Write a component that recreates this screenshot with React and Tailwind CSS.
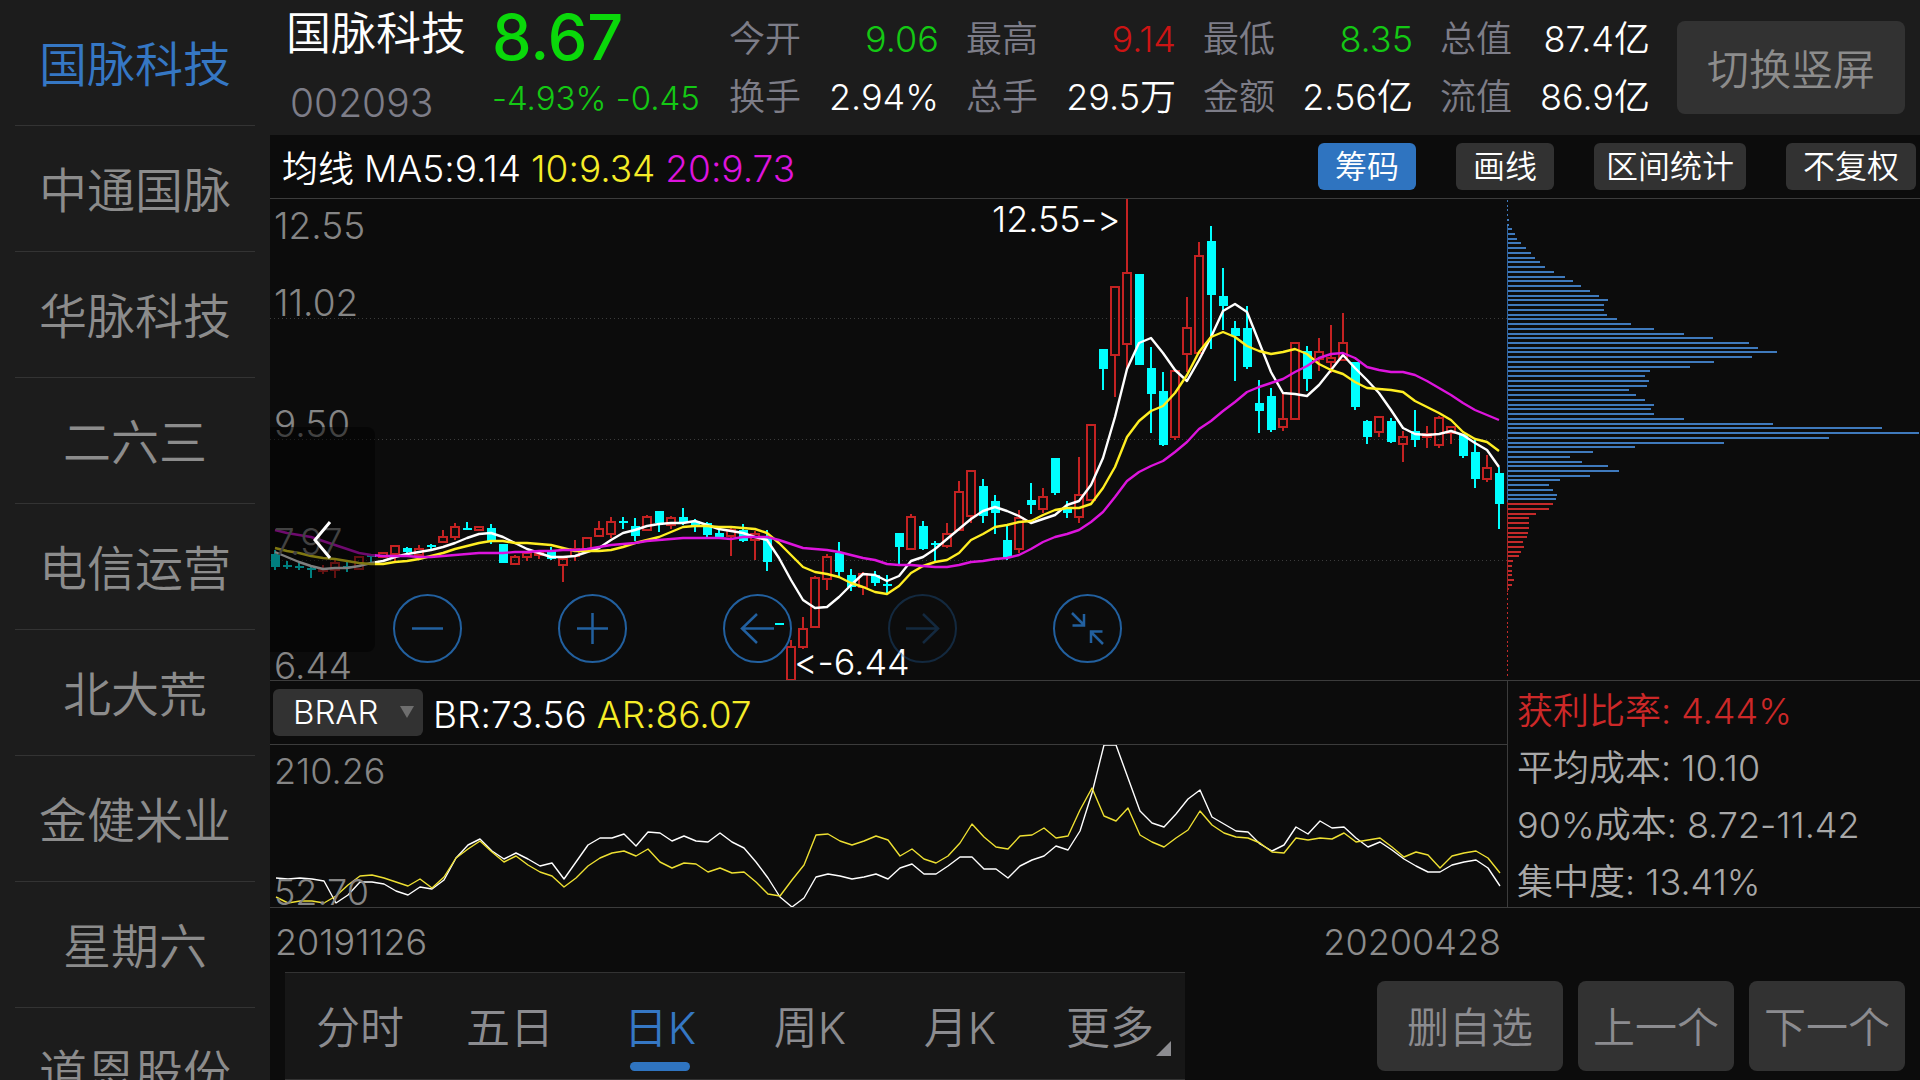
import React, { useState } from 'react';

const stocks = ['国脉科技', '中通国脉', '华脉科技', '二六三', '电信运营', '北大荒', '金健米业', '星期六', '道恩股份'];

const quotes = [
  { label: '今开', value: '9.06', color: 'text-[#14c814]' },
  { label: '最高', value: '9.14', color: 'text-[#cd1414]' },
  { label: '最低', value: '8.35', color: 'text-[#14c814]' },
  { label: '总值', value: '87.4亿', color: 'text-white' },
  { label: '换手', value: '2.94%', color: 'text-white' },
  { label: '总手', value: '29.5万', color: 'text-white' },
  { label: '金额', value: '2.56亿', color: 'text-white' },
  { label: '流值', value: '86.9亿', color: 'text-white' },
];

const periods = ['分时', '五日', '日K', '周K', '月K', '更多'];

// [up, high, body top, body bottom, low]
const candles = [
  [0, 550, 554, 567, 570], [0, 561, 565, 567, 569], [0, 562, 566, 568, 570], [0, 566, 568, 570, 578],
  [1, 565, 569, 571, 574], [1, 560, 563, 570, 578], [0, 562, 566, 568, 572], [1, 556, 557, 569, 570],
  [0, 554, 555, 557, 563], [1, 552, 553, 557, 558], [1, 546, 546, 554, 561], [0, 547, 548, 552, 554],
  [1, 545, 549, 555, 558], [0, 544, 545, 547, 549], [1, 530, 537, 542, 542], [1, 523, 527, 537, 540],
  [0, 522, 528, 530, 530], [1, 526, 527, 530, 531], [0, 524, 528, 541, 544], [0, 544, 544, 563, 563],
  [1, 555, 557, 564, 565], [1, 552, 553, 557, 561], [1, 552, 553, 555, 559], [0, 547, 550, 559, 560],
  [1, 558, 559, 565, 582], [1, 540, 549, 556, 561], [1, 537, 538, 549, 550], [1, 521, 529, 536, 536],
  [1, 517, 522, 534, 538], [0, 517, 521, 523, 529], [0, 518, 526, 536, 541], [1, 515, 517, 530, 530],
  [0, 511, 511, 523, 532], [1, 516, 518, 525, 529], [0, 508, 517, 523, 525], [0, 519, 521, 525, 532],
  [0, 522, 523, 535, 537], [0, 527, 533, 537, 538], [1, 527, 530, 536, 556], [0, 524, 530, 541, 542],
  [1, 531, 534, 540, 560], [0, 530, 537, 562, 571], [0, 623, 623, 625, 625], [1, 640, 647, 680, 680],
  [1, 617, 629, 647, 649], [1, 576, 578, 627, 627], [1, 554, 557, 579, 590], [0, 542, 553, 572, 577],
  [0, 569, 575, 587, 591], [1, 572, 574, 587, 595], [0, 571, 575, 583, 586], [0, 575, 584, 586, 593],
  [0, 533, 533, 547, 565], [1, 514, 517, 549, 549], [0, 521, 526, 549, 550], [0, 541, 543, 545, 562],
  [1, 523, 534, 546, 548], [1, 481, 492, 530, 531], [1, 470, 471, 516, 523], [0, 479, 486, 516, 523],
  [0, 495, 501, 513, 534], [0, 526, 540, 558, 560], [1, 510, 518, 549, 553], [0, 483, 500, 505, 514],
  [1, 488, 497, 509, 513], [0, 458, 458, 493, 495], [0, 501, 508, 513, 518], [1, 457, 495, 517, 523],
  [1, 424, 425, 500, 501], [0, 349, 349, 369, 390], [1, 286, 287, 355, 397], [1, 198, 273, 344, 369],
  [0, 274, 274, 365, 365], [0, 347, 368, 394, 433], [0, 372, 391, 445, 446], [1, 370, 371, 437, 440],
  [1, 297, 328, 354, 372], [1, 242, 256, 353, 354], [0, 226, 241, 295, 349], [0, 268, 296, 306, 330],
  [0, 321, 328, 336, 381], [0, 306, 328, 367, 369], [0, 380, 403, 411, 433], [0, 388, 396, 430, 432],
  [1, 393, 419, 427, 431], [1, 342, 343, 419, 420], [0, 346, 351, 379, 391], [1, 338, 352, 359, 371],
  [1, 325, 358, 362, 373], [1, 313, 343, 360, 361], [0, 362, 362, 407, 410], [0, 420, 421, 437, 444],
  [1, 416, 417, 432, 437], [0, 418, 421, 442, 443], [1, 431, 437, 444, 462], [0, 410, 431, 440, 447],
  [1, 426, 434, 437, 448], [1, 416, 418, 445, 448], [1, 426, 427, 433, 444], [0, 434, 434, 456, 458],
  [0, 440, 452, 479, 488], [1, 455, 468, 479, 482], [0, 467, 473, 504, 529],
];

const ma5 = [
  552, 557, 562, 566, 569, 568, 568, 566, 563, 561, 557, 554, 552, 550, 547, 543, 538, 534, 533, 537,
  543, 549, 553, 557, 557, 556, 552, 548, 540, 533, 530, 526, 524, 523, 523, 521, 525, 529, 531, 533,
  537, 540, 558, 580, 600, 608, 607, 597, 585, 574, 575, 581, 576, 561, 557, 549, 539, 529, 519, 511,
  507, 511, 516, 523, 519, 515, 505, 501, 485, 458, 417, 369, 343, 338, 353, 370, 381, 360, 337, 311,
  304, 312, 342, 372, 393, 394, 396, 385, 370, 355, 368, 380, 393, 410, 428, 434, 435, 434, 431, 435,
  443, 450, 467,
];

const ma10 = [
  548, 551, 553, 556, 558, 559, 561, 563, 564, 564, 562, 561, 559, 556, 553, 549, 546, 543, 541, 541,
  543, 543, 544, 545, 548, 551, 551, 551, 550, 547, 543, 540, 537, 532, 527, 526, 526, 527, 527, 528,
  529, 533, 543, 555, 567, 572, 574, 577, 583, 587, 592, 594, 586, 573, 566, 562, 560, 553, 540, 534,
  527, 525, 522, 521, 515, 510, 508, 508, 504, 488, 467, 437, 421, 411, 406, 393, 375, 352, 337, 332,
  337, 346, 351, 354, 352, 349, 354, 364, 370, 374, 382, 388, 389, 390, 392, 401, 407, 413, 420, 432,
  439, 442, 451,
];

const ma20 = [
  530, 533, 535, 537, 541, 545, 549, 553, 555, 556, 556, 556, 557, 557, 556, 555, 554, 553, 553, 553,
  552, 552, 551, 551, 550, 550, 549, 547, 545, 544, 543, 541, 540, 539, 538, 538, 538, 538, 539, 537,
  537, 537, 540, 544, 548, 549, 550, 552, 555, 558, 560, 564, 565, 565, 566, 567, 567, 565, 562, 561,
  559, 558, 555, 549, 542, 537, 534, 530, 522, 512, 497, 481, 472, 466, 461, 452, 442, 429, 421, 411,
  402, 392, 387, 383, 379, 372, 366, 358, 354, 353, 358, 367, 370, 372, 372, 375, 381, 388, 395, 403,
  410, 415, 420,
];

const br = [
  878, 879, 878, 879, 881, 903, 895, 882, 882, 884, 891, 895, 887, 889, 880, 858, 845, 839, 851, 859,
  853, 859, 866, 863, 879, 862, 845, 838, 838, 834, 846, 832, 833, 841, 836, 841, 842, 833, 842, 848,
  862, 878, 897, 907, 898, 877, 874, 876, 879, 877, 874, 879, 868, 864, 874, 874, 866, 857, 857, 869,
  869, 878, 866, 860, 856, 846, 850, 831, 793, 745, 745, 778, 811, 823, 827, 814, 799, 790, 817, 824,
  831, 832, 844, 851, 845, 827, 834, 821, 828, 827, 838, 847, 842, 850, 859, 866, 872, 872, 865, 862,
  860, 868, 886,
];

const ar = [
  897, 903, 901, 901, 903, 896, 885, 876, 875, 878, 882, 886, 879, 888, 877, 858, 849, 841, 852, 862,
  856, 865, 872, 876, 887, 878, 866, 858, 853, 851, 856, 849, 862, 868, 863, 864, 872, 868, 873, 872,
  882, 894, 896, 880, 865, 835, 834, 841, 845, 841, 836, 840, 856, 849, 859, 863, 856, 843, 824, 837,
  847, 849, 836, 835, 828, 838, 836, 810, 788, 816, 821, 808, 835, 842, 847, 838, 830, 811, 825, 833,
  837, 838, 843, 852, 853, 838, 840, 838, 839, 833, 842, 840, 838, 847, 857, 852, 855, 868, 856, 853,
  851, 858, 873,
];

// Chip distribution, one bar per price level from the top down
const chips = [
  1, 1, 1, 1, 2, 2, 5, 8, 10, 14, 19, 24, 28, 33, 38, 47, 58, 66, 74, 83, 92, 101, 97, 97, 100, 110,
  124, 147, 177, 206, 242, 251, 270, 245, 207, 183, 143, 138, 142, 140, 122, 129, 138, 147, 144, 147,
  177, 266, 375, 412, 322, 217, 128, 86, 63, 75, 101, 112, 83, 53, 42, 46, 50, 49,
  46, 42, 29, 22, 22, 22, 21, 20, 16, 17, 14, 12, 6, 5, 5, 5, 7, 5, 2,
  1, 1, 1, 1, 1, 1, 1, 1, 1, 1, 1, 1, 1, 1, 1, 1, 1, 1,
];
const profitStart = 64;

const STEP = 12;
const xAt = (i) => 5 + i * STEP;
const toPoints = (values) => values.map((y, i) => `${xAt(i)},${y}`).join(' ');

const Candle = ({ index, data }) => {
  const [up, high, top, bottom, low] = data;
  const x = xAt(index);
  if (!up) {
    return (
      <g fill="#00ffff">
        <rect x={x - 1} y={high} width="2" height={low - high} />
        <rect x={x - 4} y={top} width="9" height={bottom - top} />
      </g>
    );
  }
  return (
    <g stroke="#c42222" strokeWidth="2" fill="none">
      <path d={`M${x} ${high}V${top}M${x} ${bottom}V${low}`} />
      <rect x={x - 4} y={top} width="8" height={Math.max(bottom - top, 2)} />
    </g>
  );
};

const PriceChart = () => (
  <svg className="block h-full w-full" viewBox="0 199 1237 481" preserveAspectRatio="none">
    {[318, 439, 560].map((y) => (
      <path key={y} d={`M0 ${y + 0.5}H1237`} stroke="#3c3c3c" strokeDasharray="1 3" />
    ))}
    {candles.map((c, i) => <Candle key={i} index={i} data={c} />)}
    <g fill="none" strokeWidth="2.4" strokeLinejoin="round">
      <polyline points={toPoints(ma5)} stroke="#ffffff" />
      <polyline points={toPoints(ma10)} stroke="#ffee22" />
      <polyline points={toPoints(ma20)} stroke="#dd14dd" />
    </g>
  </svg>
);

const ChipChart = () => (
  <svg className="block h-full w-full" viewBox="0 199 413 481" preserveAspectRatio="none">
    {chips.map((w, i) => (
      <rect
        key={i}
        x="0"
        y={Math.round(199.8 + i * 4.74)}
        width={w}
        height="2"
        fill={i < profitStart ? '#3f7abd' : '#c42a2a'}
      />
    ))}
    <path d="M0.5 226V502" stroke="#2f64a0" />
    <path d="M0.5 502V592" stroke="#a82424" />
  </svg>
);

const BrarChart = () => (
  <svg className="block h-full w-full" viewBox="-1 745 1237 162" preserveAspectRatio="none">
    <g fill="none" strokeWidth="1.4" strokeLinejoin="round">
      <polyline points={toPoints(br)} stroke="#ffffff" />
      <polyline points={toPoints(ar)} stroke="#eee032" />
    </g>
  </svg>
);

const tools = [
  { name: '缩小', d: 'M19 34.5H50' },
  { name: '放大', d: 'M19 34.5H50M34.5 19V50' },
  { name: '左移', d: 'M51 34.5H19M34 20L19 34.5L34 49' },
  { name: '右移', d: 'M18 34.5H50M35 20L50 34.5L35 49', disabled: true },
  { name: '收起', d: 'M19 19L31 31M31 20V31.5H19.5M50 50L38 38M38 49V37.5H49.5' },
];

const ToolButton = ({ tool }) => (
  <button aria-label={tool.name} disabled={tool.disabled} className={tool.disabled ? 'opacity-35' : ''}>
    <svg className="block size-[69px]" viewBox="0 0 69 69" fill="none" stroke="#22609f" strokeWidth="2">
      <circle cx="34.5" cy="34.5" r="33.5" />
      <path d={tool.d} strokeWidth="2.5" />
    </svg>
  </button>
);

const Sidebar = ({ active, onSelect }) => (
  <nav className="w-[270px] shrink-0 overflow-hidden bg-[#1c1c1c] px-[15px]">
    {stocks.map((name) => (
      <button
        key={name}
        onClick={() => onSelect(name)}
        className={`block h-[126px] w-full border-b border-[#333333] pt-1 text-[48px] leading-none ${
          name === active ? 'text-[#3577c4]' : 'text-[#8c8c8c]'
        }`}
      >
        {name}
      </button>
    ))}
  </nav>
);

const Header = () => (
  <header className="flex h-[135px] shrink-0 bg-[#1c1c1c] pr-[15px] pl-4">
    <div className="w-[206px] shrink-0">
      <h1 className="pt-1 text-[45px] leading-[60px] text-white">国脉科技</h1>
      <div className="pt-3 pl-1 text-[39px] leading-[54px] text-[#7d7d88]">002093</div>
    </div>
    <div className="w-[237px] shrink-0">
      <div className="text-[63px] leading-[74px] font-medium text-[#0ad80a]">8.67</div>
      <div className="text-[33px] leading-[48px] whitespace-nowrap text-[#14c814]">-4.93% -0.45</div>
    </div>
    <dl className="grid flex-1 grid-cols-4 content-start gap-x-[27px] pt-[10px]">
      {quotes.map((q) => (
        <div key={q.label} className="flex justify-between text-[36px] leading-[58px] whitespace-nowrap">
          <dt className="text-[#7d7d88]">{q.label}</dt>
          <dd className={q.color}>{q.value}</dd>
        </div>
      ))}
    </dl>
    <button className="mt-[21px] ml-[27px] h-[93px] w-[228px] shrink-0 rounded-lg bg-[#323232] pt-1 text-[42px] text-[#8c8c8c]">
      切换竖屏
    </button>
  </header>
);

const toolbarButtons = [
  { label: '筹码', padding: 'px-[17px]' },
  { label: '画线', padding: 'px-[17px]' },
  { label: '区间统计', padding: 'px-3' },
  { label: '不复权', padding: 'px-[17px]' },
];

const Toolbar = () => {
  const [active, setActive] = useState('筹码');
  return (
    <div className="flex h-[63px] shrink-0 items-center justify-between pr-1 pl-3">
      <div className="flex items-baseline gap-[10px] pt-1 text-[37px] leading-none whitespace-nowrap">
        <span className="text-[36px]">均线</span>
        <span>MA5:9.14</span>
        <span className="text-[#f5ec28]">10:9.34</span>
        <span className="text-[#dd14dd]">20:9.73</span>
      </div>
      <div className="flex gap-10 text-[32px] leading-none">
        {toolbarButtons.map(({ label, padding }) => (
          <button
            key={label}
            onClick={() => setActive(label)}
            className={`h-[47px] rounded-md whitespace-nowrap ${padding} ${
              label === active ? 'bg-[#2f74c0]' : 'bg-[#323232]'
            }`}
          >
            {label}
          </button>
        ))}
      </div>
    </div>
  );
};

const CostPanel = () => (
  <div className="h-[228px] border-y border-l border-[#3c3c3c] pt-[2px] pl-[9px] text-[36px] leading-[57px] whitespace-nowrap text-[#a8a8a8]">
    <div className="text-[#cc2828]">获利比率: 4.44%</div>
    <div>平均成本: 10.10</div>
    <div>90%成本: 8.72-11.42</div>
    <div>集中度: 13.41%</div>
  </div>
);

const Footer = () => {
  const [period, setPeriod] = useState('日K');
  return (
    <footer className="flex h-[108px] shrink-0 justify-between pr-[15px] pl-[15px]">
      <div className="grid w-[900px] grid-cols-6 border-y border-[#333333] bg-[#171717]">
        {periods.map((p) => (
          <button
            key={p}
            onClick={() => setPeriod(p)}
            className={`relative pt-1 text-[44px] leading-none ${p === period ? 'text-[#3577c4]' : 'text-[#8c8c90]'}`}
          >
            {p}
            {p === period && (
              <span className="absolute bottom-2 left-1/2 h-[9px] w-[60px] -translate-x-1/2 rounded-full bg-[#2f74c0]" />
            )}
            {p === '更多' && (
              <svg className="absolute right-[14px] bottom-[23px] size-[15px]" viewBox="0 0 15 15">
                <path d="M15 0V15H0Z" fill="#8c8c90" />
              </svg>
            )}
          </button>
        ))}
      </div>
      <div className="flex gap-[15px] pt-[9px] text-[42px] leading-none text-[#8c8c90]">
        <button className="h-[90px] w-[186px] rounded-lg bg-[#323232] pt-1">删自选</button>
        <button className="h-[90px] w-[156px] rounded-lg bg-[#323232] pt-1">上一个</button>
        <button className="h-[90px] w-[156px] rounded-lg bg-[#323232] pt-1">下一个</button>
      </div>
    </footer>
  );
};

export default function App() {
  const [stock, setStock] = useState('国脉科技');

  return (
    <div className="flex h-screen overflow-hidden bg-[#0c0c0c] font-['Inter','Noto_Sans_CJK_SC',sans-serif] font-[350] text-white [font-feature-settings:'calt'_0]">
      <Sidebar active={stock} onSelect={setStock} />
      <main className="flex min-w-0 flex-1 flex-col">
        <Header />
        <Toolbar />
        <section className="flex min-h-0 flex-1 border-t border-[#3c3c3c]">
          <div className="flex min-w-0 flex-1 flex-col">
            <div className="relative min-h-0 flex-1">
              <PriceChart />
              <div className="absolute inset-0 text-[37px] leading-none font-light text-[#858585]">
                <span className="absolute top-2 left-1">12.55</span>
                <span className="absolute top-[85px] left-1">11.02</span>
                <span className="absolute top-[206px] left-1">9.50</span>
                <span className="absolute top-[324px] left-1">7.97</span>
                <span className="absolute bottom-[-4px] left-1">6.44</span>
                <span className="absolute top-[2px] left-[722px] text-[36px] text-white">12.55-&gt;</span>
                <span className="absolute bottom-0 left-[524px] text-[36px] text-white">&lt;-6.44</span>
              </div>
              <button
                aria-label="展开"
                className="absolute top-[228px] left-0 h-[225px] w-[105px] rounded-r-lg bg-black/50"
              >
                <svg className="absolute top-[94px] left-[43px] h-[38px] w-[20px]" viewBox="0 0 20 38">
                  <path d="M17 1L2 19L17 37" fill="none" stroke="#ffffff" strokeWidth="3" />
                </svg>
              </button>
              <div className="absolute bottom-[17px] left-[123px] flex gap-24">
                {tools.map((tool) => <ToolButton key={tool.name} tool={tool} />)}
              </div>
            </div>

            <div className="flex h-16 shrink-0 items-center border-t border-[#3c3c3c] pl-[3px]">
              <div className="relative">
                <select
                  aria-label="指标"
                  className="block h-[47px] w-[150px] appearance-none rounded-md bg-[#323232] pl-5 text-[33px] leading-none text-white"
                >
                  <option>BRAR</option>
                </select>
                <svg className="pointer-events-none absolute top-[17px] right-[9px] h-3 w-[14px]" viewBox="0 0 14 12">
                  <path d="M0 0H14L7 12Z" fill="#6e6e6e" />
                </svg>
              </div>
              <div className="flex gap-[10px] pt-1 pl-[10px] text-[37px] leading-none">
                <span>BR:73.56</span>
                <span className="text-[#f5ec28]">AR:86.07</span>
              </div>
            </div>

            <div className="relative h-[164px] shrink-0 border-y border-[#3c3c3c] font-light">
              <BrarChart />
              <span className="absolute top-2 left-1 text-[36px] leading-none text-[#858585]">210.26</span>
              <span className="absolute bottom-[-3px] left-1 text-[36px] leading-none text-[#858585]">52.70</span>
            </div>
          </div>

          <aside className="flex w-[413px] shrink-0 flex-col">
            <div className="min-h-0 flex-1">
              <ChipChart />
            </div>
            <CostPanel />
          </aside>
        </section>

        <div className="mr-[413px] flex h-16 shrink-0 items-center justify-between pt-1 pr-[6px] pl-[5px] text-[36px] leading-none font-light text-[#8c8c8c]">
          <span>20191126</span>
          <span>20200428</span>
        </div>
        <Footer />
      </main>
    </div>
  );
}
